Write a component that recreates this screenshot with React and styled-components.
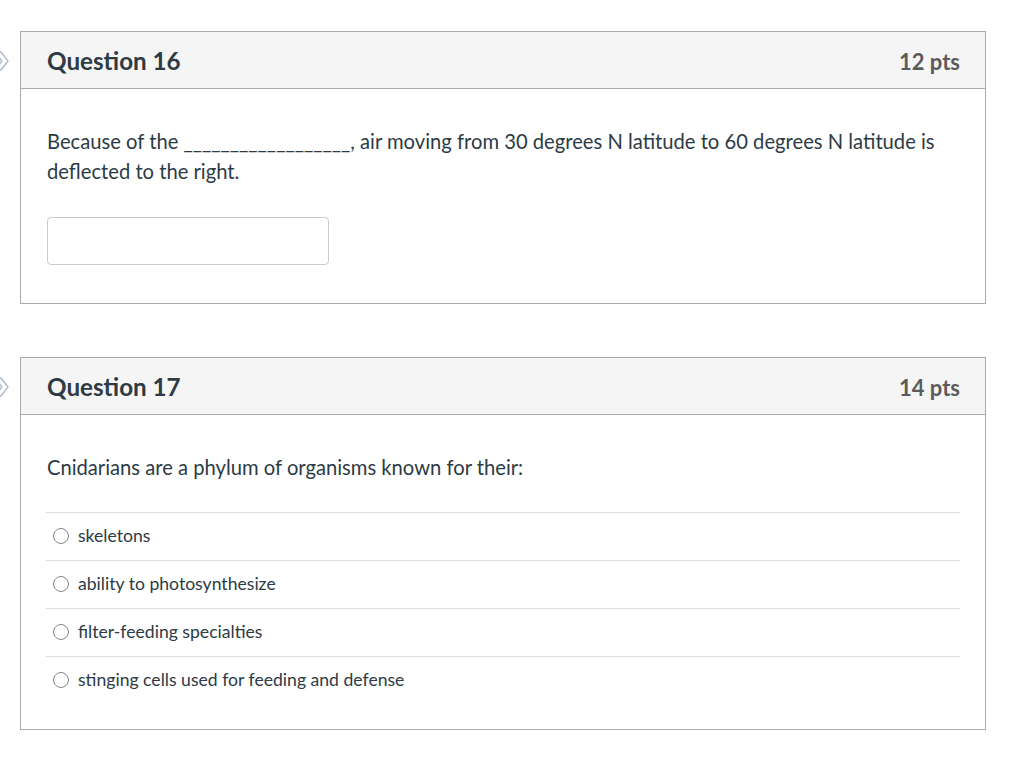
import React from "react";
import styled, { createGlobalStyle } from "styled-components";

const GlobalStyle = createGlobalStyle`
  body {
    margin: 0;
    background: #ffffff;
    font-family: Lato, "Open Sans", sans-serif;
    color: #2d3b45;
  }
`;

const Page = styled.div`
  padding-top: 31px;
  display: flex;
  flex-direction: column;
  gap: 53px;
`;

const Row = styled.div`
  display: grid;
  grid-template-columns: 20px 966px;
`;

const Gutter = styled.div`
  height: 57px;
  display: flex;
  align-items: center;
  overflow: hidden;
`;

const Card = styled.div`
  border: 1px solid #aaaaaa;
  background: #ffffff;
`;

const Header = styled.div`
  height: 56px;
  padding: 0 25px 0 26px;
  background: #f5f5f5;
  border-bottom: 1px solid #aaaaaa;
  display: flex;
  align-items: center;
  justify-content: space-between;
`;

const Title = styled.div`
  font-size: 24.2px;
  font-weight: 700;
  color: #2d3b45;
`;

const Points = styled.div`
  font-size: 22px;
  font-weight: 700;
  color: #5b5b5b;
  padding-top: 2px;
`;

const Body = styled.div`
  padding: 37px 25px ${(p) => p.bottom}px 26px;
`;

const Text = styled.div`
  font-size: 20.2px;
  line-height: 30px;
  color: #2d3b45;
`;

const AnswerInput = styled.input`
  display: block;
  box-sizing: border-box;
  margin-top: 31px;
  width: 282px;
  height: 48px;
  border: 1px solid #c7cdd1;
  border-radius: 4px;
  background: #fff;
  outline: none;
`;

const AnswerList = styled.div`
  margin-top: 30px;
  margin-left: -1px;
`;

const Answer = styled.label`
  display: flex;
  align-items: center;
  height: 45px;
  padding-bottom: 2px;
  border-top: 1px solid #dddddd;
  padding-left: 7px;
  font-size: 17.6px;
  color: #2d3b45;
`;

const Radio = styled.span`
  box-sizing: border-box;
  width: 16px;
  height: 16px;
  border: 1px solid #858585;
  border-radius: 50%;
  margin-right: 9px;
  margin-top: 1px;
  flex-shrink: 0;
`;

const Chevron = () => (
  <svg width="12" height="20" viewBox="0 0 12 20" style={{ marginTop: 2 }}>
    <polygon
      points="-5,1 1,1 8,10 1,19 -5,19 2,10"
      fill="#ffffff"
      stroke="#a9b9c9"
      strokeWidth="1.3"
      strokeLinejoin="round"
    />
  </svg>
);

const QuestionCard = ({ title, pts, bottom, children }) => (
  <Row>
    <Gutter>
      <Chevron />
    </Gutter>
    <Card>
      <Header>
        <Title>{title}</Title>
        <Points>{pts}</Points>
      </Header>
      <Body bottom={bottom}>{children}</Body>
    </Card>
  </Row>
);

const answers = [
  "skeletons",
  "ability to photosynthesize",
  "filter-feeding specialties",
  "stinging cells used for feeding and defense",
];

const App = () => (
  <>
    <GlobalStyle />
    <Page>
      <QuestionCard title="Question 16" pts="12 pts" bottom={38}>
        <Text>
          Because of the __________________, air moving from 30 degrees N
          latitude to 60 degrees N latitude is deflected to the right.
        </Text>
        <AnswerInput type="text" />
      </QuestionCard>
      <QuestionCard title="Question 17" pts="14 pts" bottom={25}>
        <Text>Cnidarians are a phylum of organisms known for their:</Text>
        <AnswerList>
          {answers.map((a) => (
            <Answer key={a}>
              <Radio />
              {a}
            </Answer>
          ))}
        </AnswerList>
      </QuestionCard>
    </Page>
  </>
);

export default App;
